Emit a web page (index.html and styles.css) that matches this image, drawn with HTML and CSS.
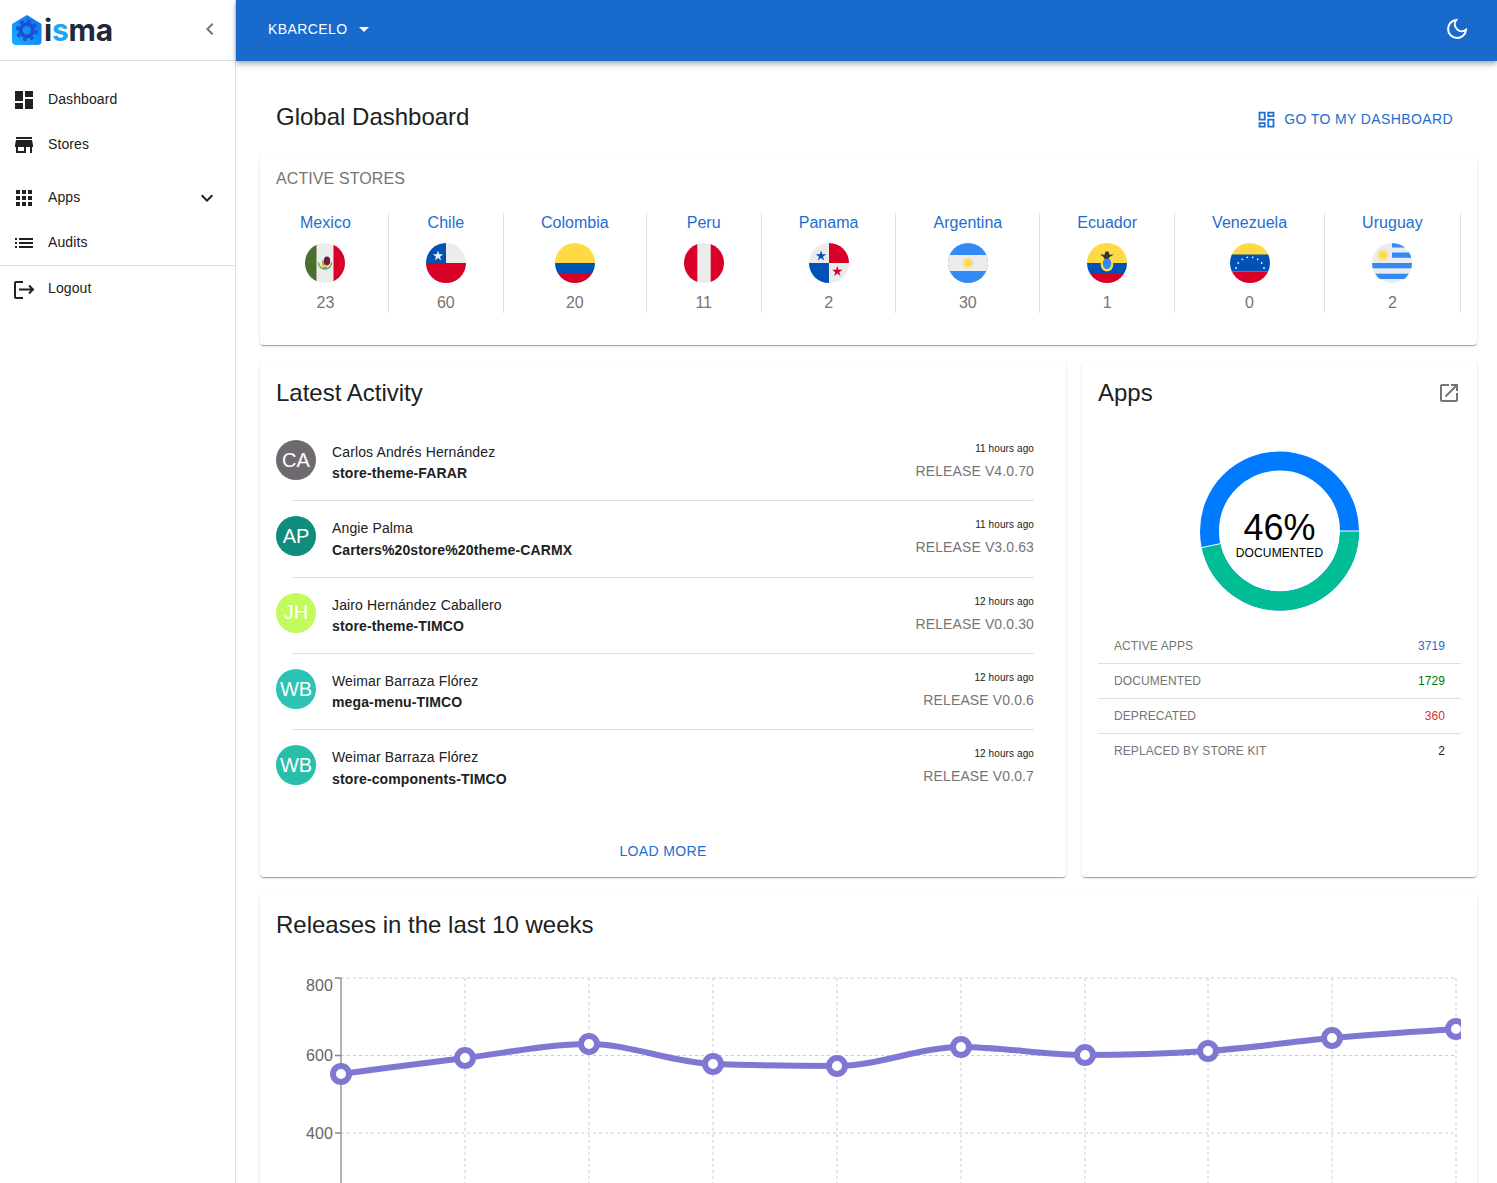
FILE: index.html
```html
<!DOCTYPE html>
<html>

<head>
  <title>isma - Global Dashboard</title>
  <link rel="stylesheet" href="styles.css">
</head>

<body>
  <div class="app">
    <aside class="sidebar">
      <div class="sidebar-head">
        <div class="logo">
          <svg class="logo-mark" width="30" height="30" viewBox="0 0 30 30">
            <defs>
              <linearGradient id="logoBlue" x1="0" y1="1" x2="1" y2="0">
                <stop offset="0" stop-color="#19b0ff"/>
                <stop offset="1" stop-color="#0a6ff0"/>
              </linearGradient>
            </defs>
            <path d="M15 0 L29.5 9 V26 a4 4 0 0 1 -4 4 H4 a4 4 0 0 1 -4 -4 V9 Z" fill="url(#logoBlue)"/>
            <circle cx="14.8" cy="15.3" r="6.2" fill="none" stroke="#1b4fd0" stroke-width="4"/>
            <circle cx="14.8" cy="15.3" r="9.6" fill="none" stroke="#1b4fd0" stroke-width="2.6" stroke-dasharray="3.8 3.74"/>
          </svg>
          <span class="logo-text">i<span class="logo-s">s</span>ma</span>
        </div>
        <svg class="icon icon-grey" viewBox="0 0 24 24"><path d="M15.41 7.41L14 6l-6 6 6 6 1.41-1.41L10.83 12z"/></svg>
      </div>
      <nav class="nav">
        <ul class="nav-list">
          <li class="nav-item">
            <svg class="icon" viewBox="0 0 24 24"><path d="M3 13h8V3H3v10zm0 8h8v-6H3v6zm10 0h8V11h-8v10zm0-18v6h8V3h-8z"/></svg>
            <span class="nav-label">Dashboard</span>
          </li>
          <li class="nav-item">
            <svg class="icon" viewBox="0 0 24 24"><path d="M20 4H4v2h16V4zm1 10v-2l-1-5H4l-1 5v2h1v6h10v-6h4v6h2v-6h1zm-9 4H6v-4h6v4z"/></svg>
            <span class="nav-label">Stores</span>
          </li>
        </ul>
        <ul class="nav-list nav-group">
          <li class="nav-item">
            <svg class="icon" viewBox="0 0 24 24"><path d="M4 8h4V4H4v4zm6 12h4v-4h-4v4zm-6 0h4v-4H4v4zm0-6h4v-4H4v4zm6 0h4v-4h-4v4zm6-10v4h4V4h-4zm-6 4h4V4h-4v4zm6 6h4v-4h-4v4zm0 6h4v-4h-4v4z"/></svg>
            <span class="nav-label">Apps</span>
            <svg class="icon nav-expand" viewBox="0 0 24 24"><path d="M16.59 8.59L12 13.17 7.41 8.59 6 10l6 6 6-6z"/></svg>
          </li>
          <li class="nav-item">
            <svg class="icon" viewBox="0 0 24 24"><path d="M3 13h2v-2H3v2zm0 4h2v-2H3v2zm0-8h2V7H3v2zm4 4h14v-2H7v2zm0 4h14v-2H7v2zM7 7v2h14V7H7z"/></svg>
            <span class="nav-label">Audits</span>
          </li>
        </ul>
        <ul class="nav-list nav-bottom">
          <li class="nav-item">
            <svg class="icon icon-line" viewBox="0 0 24 24"><path d="M11 5H4a1 1 0 0 0-1 1v14a1 1 0 0 0 1 1h7M7 12.5h14M17 8.500l4 4-4 4"/></svg>
            <span class="nav-label">Logout</span>
          </li>
        </ul>
      </nav>
    </aside>

    <div class="content">
      <header class="appbar">
        <div class="account">
          KBARCELO
          <svg class="icon icon-white" viewBox="0 0 24 24"><path d="M7 10l5 5 5-5z"/></svg>
        </div>
        <svg class="moon" viewBox="0 0 24 24"><path d="M21 12.79A9 9 0 1 1 11.21 3 7 7 0 0 0 21 12.79z"/></svg>
      </header>

      <main class="main">
        <div class="page-head">
          <h1 class="page-title">Global Dashboard</h1>
          <a class="my-dashboard">
            <svg class="icon-my" viewBox="0 0 24 24"><path d="M19 5v2h-4V5h4M9 5v6H5V5h4m10 8v6h-4v-6h4M9 17v2H5v-2h4M21 3h-8v6h8V3zM11 3H3v10h8V3zm10 8h-8v10h8V11zm-10 4H3v6h8v-6z"/></svg>
            GO TO MY DASHBOARD
          </a>
        </div>

        <section class="card stores">
          <div class="stores-title">ACTIVE STORES</div>
          <div class="stores-row">
            <div class="store">
              <div class="store-name">Mexico</div>
              <svg class="flag" viewBox="0 0 40 40">
                <rect width="40" height="40" fill="#ececec"/>
                <rect width="11.5" height="40" fill="#496e2d"/>
                <rect x="28.5" width="11.5" height="40" fill="#d80027"/>
                <path d="M13.5 19.5c0 4 3 6.5 6.5 6.5s6.5-2.5 6.5-6.5" fill="none" stroke="#6da544" stroke-width="1.4"/>
                <path d="M16 22h8l-1.5 3h-5z" fill="#ffda44"/>
                <path d="M17 17.5h3v5h-3z" fill="#a2b54f"/>
                <ellipse cx="22" cy="18" rx="3.2" ry="4.4" fill="#751a46"/>
                <rect x="18" y="24.2" width="4" height="1.4" fill="#338af3"/>
              </svg>
              <div class="store-count">23</div>
            </div>
            <div class="store">
              <div class="store-name">Chile</div>
              <svg class="flag" viewBox="0 0 40 40">
                <rect width="40" height="40" fill="#ececec"/>
                <rect y="20" width="40" height="20" fill="#d80027"/>
                <rect width="20" height="20" fill="#0052b4"/>
                <polygon transform="translate(12 13) scale(5.5)" fill="#f0f0f0" points="0,-1 .225,-.309 .951,-.309 .363,.118 .588,.809 0,.382 -.588,.809 -.363,.118 -.951,-.309 -.225,-.309"/>
              </svg>
              <div class="store-count">60</div>
            </div>
            <div class="store">
              <div class="store-name">Colombia</div>
              <svg class="flag" viewBox="0 0 40 40">
                <rect width="40" height="20" fill="#ffda44"/>
                <rect y="20" width="40" height="10" fill="#0052b4"/>
                <rect y="30" width="40" height="10" fill="#d80027"/>
              </svg>
              <div class="store-count">20</div>
            </div>
            <div class="store">
              <div class="store-name">Peru</div>
              <svg class="flag" viewBox="0 0 40 40">
                <rect width="40" height="40" fill="#ececec"/>
                <rect width="13.3" height="40" fill="#d80027"/>
                <rect x="26.7" width="13.3" height="40" fill="#d80027"/>
              </svg>
              <div class="store-count">11</div>
            </div>
            <div class="store">
              <div class="store-name">Panama</div>
              <svg class="flag" viewBox="0 0 40 40">
                <rect width="40" height="40" fill="#ececec"/>
                <rect x="20" width="20" height="20" fill="#d80027"/>
                <rect y="20" width="20" height="20" fill="#0052b4"/>
                <polygon transform="translate(12 13) scale(5.5)" fill="#0052b4" points="0,-1 .225,-.309 .951,-.309 .363,.118 .588,.809 0,.382 -.588,.809 -.363,.118 -.951,-.309 -.225,-.309"/>
                <polygon transform="translate(28.3 28.5) scale(5.5)" fill="#d80027" points="0,-1 .225,-.309 .951,-.309 .363,.118 .588,.809 0,.382 -.588,.809 -.363,.118 -.951,-.309 -.225,-.309"/>
              </svg>
              <div class="store-count">2</div>
            </div>
            <div class="store">
              <div class="store-name">Argentina</div>
              <svg class="flag" viewBox="0 0 40 40">
                <rect width="40" height="40" fill="#338af3"/>
                <rect y="12" width="40" height="16" fill="#ececec"/>
                <circle cx="20" cy="20" r="3.6" fill="#ffda44"/>
                <circle cx="20" cy="20" r="4.6" fill="none" stroke="#ffda44" stroke-width="2" stroke-dasharray="1.2 1.2"/>
              </svg>
              <div class="store-count">30</div>
            </div>
            <div class="store">
              <div class="store-name">Ecuador</div>
              <svg class="flag" viewBox="0 0 40 40">
                <rect width="40" height="20" fill="#ffda44"/>
                <rect y="20" width="40" height="10" fill="#0052b4"/>
                <rect y="30" width="40" height="10" fill="#d80027"/>
                <ellipse cx="20" cy="21.5" rx="6.3" ry="7" fill="#ffda44"/>
                <ellipse cx="20" cy="20.5" rx="4.2" ry="5.5" fill="#338af3"/>
                <path d="M13 11.5l4.5 .3 1-3.300h3l1 3.300 4.5-.3-4.500 2.600-.8 1.600h-4.400l-.8-1.600z" fill="#333"/>
              </svg>
              <div class="store-count">1</div>
            </div>
            <div class="store">
              <div class="store-name">Venezuela</div>
              <svg class="flag" viewBox="0 0 40 40">
                <rect width="40" height="12" fill="#ffda44"/>
                <rect y="11.5" width="40" height="17" fill="#0052b4"/>
                <rect y="28.5" width="40" height="11.5" fill="#d80027"/>
                <g fill="#f0f0f0">
                  <circle cx="6" cy="25" r=".9"/>
                  <circle cx="8.3" cy="20" r=".9"/>
                  <circle cx="12.3" cy="16.3" r=".9"/>
                  <circle cx="17.3" cy="14.3" r=".9"/>
                  <circle cx="22.7" cy="14.3" r=".9"/>
                  <circle cx="27.7" cy="16.3" r=".9"/>
                  <circle cx="31.7" cy="20" r=".9"/>
                  <circle cx="34" cy="25" r=".9"/>
                </g>
              </svg>
              <div class="store-count">0</div>
            </div>
            <div class="store">
              <div class="store-name">Uruguay</div>
              <svg class="flag" viewBox="0 0 40 40">
                <rect width="40" height="40" fill="#ececec"/>
                <rect x="20" width="20" height="4.5" fill="#338af3"/>
                <rect x="20" y="9.5" width="20" height="5.3" fill="#338af3"/>
                <rect y="20" width="40" height="5.3" fill="#338af3"/>
                <rect y="30.7" width="40" height="5.3" fill="#338af3"/>
                <circle cx="11" cy="12" r="3.4" fill="#ffda44"/>
                <circle cx="11" cy="12" r="4.5" fill="none" stroke="#ffda44" stroke-width="2" stroke-dasharray="1.2 1.15"/>
              </svg>
              <div class="store-count">2</div>
            </div>
          </div>
        </section>

        <div class="middle">
          <section class="card activity">
            <h2 class="card-title">Latest Activity</h2>
            <ul class="activity-list">
              <li class="activity-row">
                <div class="avatar avatar-ca">CA</div>
                <div class="activity-main">
                  <div class="activity-user">Carlos Andrés Hernández</div>
                  <div class="activity-app">store-theme-FARAR</div>
                </div>
                <div class="activity-side">
                  <div class="activity-time">11 hours ago</div>
                  <div class="activity-release">RELEASE V4.0.70</div>
                </div>
              </li>
              <li class="activity-row">
                <div class="avatar avatar-ap">AP</div>
                <div class="activity-main">
                  <div class="activity-user">Angie Palma</div>
                  <div class="activity-app">Carters%20store%20theme-CARMX</div>
                </div>
                <div class="activity-side">
                  <div class="activity-time">11 hours ago</div>
                  <div class="activity-release">RELEASE V3.0.63</div>
                </div>
              </li>
              <li class="activity-row">
                <div class="avatar avatar-jh">JH</div>
                <div class="activity-main">
                  <div class="activity-user">Jairo Hernández Caballero</div>
                  <div class="activity-app">store-theme-TIMCO</div>
                </div>
                <div class="activity-side">
                  <div class="activity-time">12 hours ago</div>
                  <div class="activity-release">RELEASE V0.0.30</div>
                </div>
              </li>
              <li class="activity-row">
                <div class="avatar avatar-wb">WB</div>
                <div class="activity-main">
                  <div class="activity-user">Weimar Barraza Flórez</div>
                  <div class="activity-app">mega-menu-TIMCO</div>
                </div>
                <div class="activity-side">
                  <div class="activity-time">12 hours ago</div>
                  <div class="activity-release">RELEASE V0.0.6</div>
                </div>
              </li>
              <li class="activity-row">
                <div class="avatar avatar-wb2">WB</div>
                <div class="activity-main">
                  <div class="activity-user">Weimar Barraza Flórez</div>
                  <div class="activity-app">store-components-TIMCO</div>
                </div>
                <div class="activity-side">
                  <div class="activity-time">12 hours ago</div>
                  <div class="activity-release">RELEASE V0.0.7</div>
                </div>
              </li>
            </ul>
            <button class="load-more">LOAD MORE</button>
          </section>

          <section class="card apps">
            <div class="apps-head">
              <h2 class="card-title">Apps</h2>
              <svg class="icon icon-grey" viewBox="0 0 24 24"><path d="M19 19H5V5h7V3H5c-1.11 0-2 .9-2 2v14c0 1.1.89 2 2 2h14c1.1 0 2-.9 2-2v-7h-2v7zM14 3v2h3.59l-9.83 9.83 1.41 1.41L19 6.41V10h2V3h-7z"/></svg>
            </div>
            <div class="donut">
              <svg width="159" height="160" viewBox="0.5 0 159 160">
                <circle cx="80" cy="80" r="70" fill="none" stroke="#007bff" stroke-width="19"/>
                <path d="M150 80A70 70 0 0 1 11.6 94.9" fill="none" stroke="#00bd94" stroke-width="19"/>
                <path d="M140 80H160M0 97.1L21.5 92.5" stroke="#fff" stroke-width="1"/>
              </svg>
              <div class="donut-label">
                <div class="donut-value">46%</div>
                <div class="donut-text">DOCUMENTED</div>
              </div>
            </div>
            <ul class="apps-table">
              <li class="apps-row">ACTIVE APPS <span class="num-blue">3719</span></li>
              <li class="apps-row">DOCUMENTED <span class="num-green">1729</span></li>
              <li class="apps-row">DEPRECATED <span class="num-red">360</span></li>
              <li class="apps-row">REPLACED BY STORE KIT <span class="num-dark">2</span></li>
            </ul>
          </section>
        </div>

        <section class="card releases">
          <h2 class="card-title">Releases in the last 10 weeks</h2>
          <svg class="chart" width="1185" height="240" viewBox="0 0 1185 240">
            <g class="grid">
              <path d="M65 18H1180M65 95.5H1180M65 173H1180"/>
              <path d="M189 18V240M313 18V240M437 18V240M561 18V240M685 18V240M809 18V240M932 18V240M1056 18V240M1180 18V240"/>
            </g>
            <path class="axis" d="M65 18V240M59 18H65M59 95.5H65M59 173H65"/>
            <g class="axis-labels">
              <text x="57" y="31">800</text>
              <text x="57" y="101">600</text>
              <text x="57" y="179">400</text>
            </g>
            <path class="line" d="M65 114C106.3 108.5 147.7 103 189 98C230.3 93 271.7 84 313 84C354.3 84 395.7 102.7 437 104C478.3 105.3 519.7 106 561 106C602.3 106 643.7 87 685 87C726.3 87 767.7 95 809 95C850 95 890.7 93.7 932 91C973.3 88.3 1014.7 81.7 1056 78C1097.3 74.3 1138.7 71.7 1180 69"/>
            <g class="dots">
              <circle cx="65" cy="114" r="8"/>
              <circle cx="189" cy="98" r="8"/>
              <circle cx="313" cy="84" r="8"/>
              <circle cx="437" cy="104" r="8"/>
              <circle cx="561" cy="106" r="8"/>
              <circle cx="685" cy="87" r="8"/>
              <circle cx="809" cy="95" r="8"/>
              <circle cx="932" cy="91" r="8"/>
              <circle cx="1056" cy="78" r="8"/>
              <circle cx="1180" cy="69" r="8"/>
            </g>
          </svg>
        </section>
      </main>
    </div>
  </div>
</body>

</html>
```

FILE: styles.css
```css
* {
  box-sizing: border-box;
}

body {
  margin: 0;
  font-family: "Liberation Sans", Arial, sans-serif;
  color: #212121;
  background: #fff;
}

ul {
  list-style-type: none;
  margin: 0;
  padding: 0;
}

.app {
  display: flex;
  height: 100vh;
  overflow: hidden;
}

.icon {
  width: 24px;
  height: 24px;
  flex-shrink: 0;
  fill: #212121;
}

.icon-grey {
  fill: #757575;
}

.icon-white {
  fill: #fff;
}

.icon-line {
  fill: none;
  stroke: #212121;
  stroke-width: 2;
}

/* sidebar */
.sidebar {
  width: 236px;
  flex-shrink: 0;
  border-right: 1px solid #e0e0e0;
}

.sidebar-head {
  display: flex;
  align-items: center;
  justify-content: space-between;
  height: 61px;
  padding: 0 13px 3px 12px;
  border-bottom: 1px solid #e0e0e0;
}

.logo {
  display: flex;
  align-items: center;
  gap: 2px;
  padding-top: 3px;
}

.logo-text {
  font-family: Inter, sans-serif;
  font-size: 30px;
  font-weight: 700;
  line-height: 30px;
  color: #1e2a3a;
  letter-spacing: -0.2px;
}

.logo-s {
  color: #1ea6f5;
}

.nav {
  padding-top: 16px;
}

.nav-group {
  margin-top: 8px;
}

.nav-bottom {
  border-top: 1px solid #e0e0e0;
}

.nav-item {
  display: flex;
  align-items: center;
  gap: 12px;
  height: 45px;
  padding: 0 16px 0 12px;
  font-size: 14px;
}

.nav-label {
  padding-bottom: 2px;
  letter-spacing: 0.1px;
}

.nav-expand {
  margin-left: auto;
}

/* top bar */
.content {
  flex: 1;
  min-width: 0;
}

.appbar {
  display: flex;
  align-items: center;
  justify-content: space-between;
  height: 61px;
  padding: 0 28px 3px 32px;
  background: #186acc;
  box-shadow: 0 2px 4px -1px rgba(0, 0, 0, 0.2), 0 4px 5px 0 rgba(0, 0, 0, 0.14), 0 1px 10px 0 rgba(0, 0, 0, 0.12);
}

.account {
  display: flex;
  align-items: center;
  gap: 5px;
  color: #fff;
  font-size: 14px;
  letter-spacing: 0.4px;
}

.moon {
  width: 24px;
  height: 24px;
  fill: none;
  stroke: #fff;
  stroke-width: 2;
}

/* main */
.main {
  padding: 0 20px 0 24px;
}

.page-head {
  display: flex;
  align-items: flex-start;
  justify-content: space-between;
  height: 94px;
  padding: 40px 24px 0 16px;
}

.page-title {
  margin: 0;
  font-size: 24px;
  font-weight: 400;
  line-height: 32px;
}

.my-dashboard {
  display: flex;
  align-items: center;
  gap: 7px;
  margin-top: 6px;
  color: #1c6ed0;
  font-size: 14px;
  line-height: 24px;
  letter-spacing: 0.39px;
}

.icon-my {
  width: 21px;
  height: 21px;
  fill: #1c6ed0;
}

.card {
  background: #fff;
  border-radius: 4px;
  box-shadow: 0 2px 1px -1px rgba(0, 0, 0, 0.2), 0 1px 1px 0 rgba(0, 0, 0, 0.14), 0 1px 3px 0 rgba(0, 0, 0, 0.12);
}

.card-title {
  margin: 0;
  font-size: 24px;
  font-weight: 400;
  line-height: 32px;
}

/* active stores */
.stores {
  height: 190px;
  padding: 12px 16px 0 3px;
}

.stores-title {
  padding-left: 13px;
  font-size: 16px;
  line-height: 24px;
  letter-spacing: 0.1px;
  color: #757575;
}

.stores-row {
  display: flex;
  margin-top: 22px;
}

.store {
  display: flex;
  flex-direction: column;
  align-items: center;
  height: 100px;
  padding: 0 37px;
  border-right: 1px solid #e0e0e0;
}

.store-name {
  font-size: 16px;
  line-height: 20px;
  letter-spacing: 0.03px;
  color: #1c6ed0;
}

.flag {
  width: 40px;
  height: 40px;
  margin-top: 10px;
  border-radius: 50%;
}

.store-count {
  margin-top: 11px;
  font-size: 16px;
  line-height: 18px;
  color: #757575;
}

.middle {
  display: grid;
  grid-template-columns: 806px 395px;
  gap: 16px;
  height: 516px;
  margin-top: 16px;
}

/* latest activity */
.activity {
  display: flex;
  flex-direction: column;
  padding: 16px 16px 8px;
}

.activity-list {
  margin-top: 15px;
  padding-right: 16px;
}

.activity-row {
  position: relative;
  display: flex;
  align-items: flex-start;
  height: 76.33px;
  padding-top: 16.1px;
}

.activity-row + .activity-row::before {
  content: "";
  position: absolute;
  top: 0;
  left: 16px;
  right: 0;
  border-top: 1px solid #e0e0e0;
}

.avatar {
  display: flex;
  align-items: center;
  justify-content: center;
  width: 40px;
  height: 40px;
  margin-right: 16px;
  border-radius: 50%;
  color: #fff;
  font-size: 20px;
}

.avatar-ca {
  background: #6f6a70;
}

.avatar-ap {
  background: #0e8c7c;
}

.avatar-jh {
  background: #c2fb5e;
}

.avatar-wb {
  background: #2cc3b5;
}

.avatar-wb2 {
  background: #27bfa9;
}

.activity-main {
  flex: 1;
  margin-top: 1.9px;
  font-size: 14px;
  line-height: 20px;
  letter-spacing: 0.13px;
}

.activity-app {
  margin-top: 1.3px;
  font-weight: 700;
}

.activity-side {
  margin-top: -0.1px;
  text-align: right;
}

.activity-time {
  font-size: 10px;
  line-height: 18px;
  letter-spacing: 0.1px;
}

.activity-release {
  font-size: 14px;
  line-height: 26.8px;
  letter-spacing: 0.12px;
  color: #757575;
}

.load-more {
  align-self: center;
  height: 36px;
  margin-top: auto;
  padding: 0 8px;
  border: none;
  background: none;
  color: #1c6ed0;
  font-family: inherit;
  font-size: 14px;
  letter-spacing: 0.35px;
}

/* apps */
.apps {
  padding: 16px;
}

.apps-head {
  display: flex;
  align-items: center;
  justify-content: space-between;
}

.donut {
  position: relative;
  display: flex;
  justify-content: center;
  margin-top: 42px;
}

.donut-label {
  position: absolute;
  top: 58px;
  left: 0;
  right: 0;
  text-align: center;
  color: #000;
}

.donut-value {
  font-size: 36px;
  line-height: 37px;
}

.donut-text {
  font-size: 12px;
  line-height: 14px;
  letter-spacing: 0.15px;
}

.apps-table {
  margin-top: 18px;
}

.apps-row {
  display: flex;
  align-items: center;
  justify-content: space-between;
  height: 35px;
  padding: 0 16px;
  border-bottom: 1px solid #e0e0e0;
  font-size: 12px;
  letter-spacing: 0.1px;
  color: #757575;
}

.apps-row:last-child {
  border-bottom-color: transparent;
}

.num-blue {
  color: #1c6ed0;
}

.num-green {
  color: #007d00;
}

.num-red {
  color: #d32f2f;
}

.num-dark {
  color: #212121;
}

/* releases chart */
.releases {
  height: 400px;
  margin-top: 16px;
  padding: 16px;
}

.chart {
  display: block;
  margin-top: 19px;
}

.grid {
  fill: none;
  stroke: #ccc;
  stroke-dasharray: 3 3;
}

.axis {
  fill: none;
  stroke: #888;
  stroke-width: 1.3;
}

.axis-labels {
  font-size: 16px;
  fill: #666;
  text-anchor: end;
  letter-spacing: 0.1px;
}

.line {
  fill: none;
  stroke: #7f78d2;
  stroke-width: 6;
}

.dots {
  fill: #fff;
  stroke: #7f78d2;
  stroke-width: 6;
}
```
